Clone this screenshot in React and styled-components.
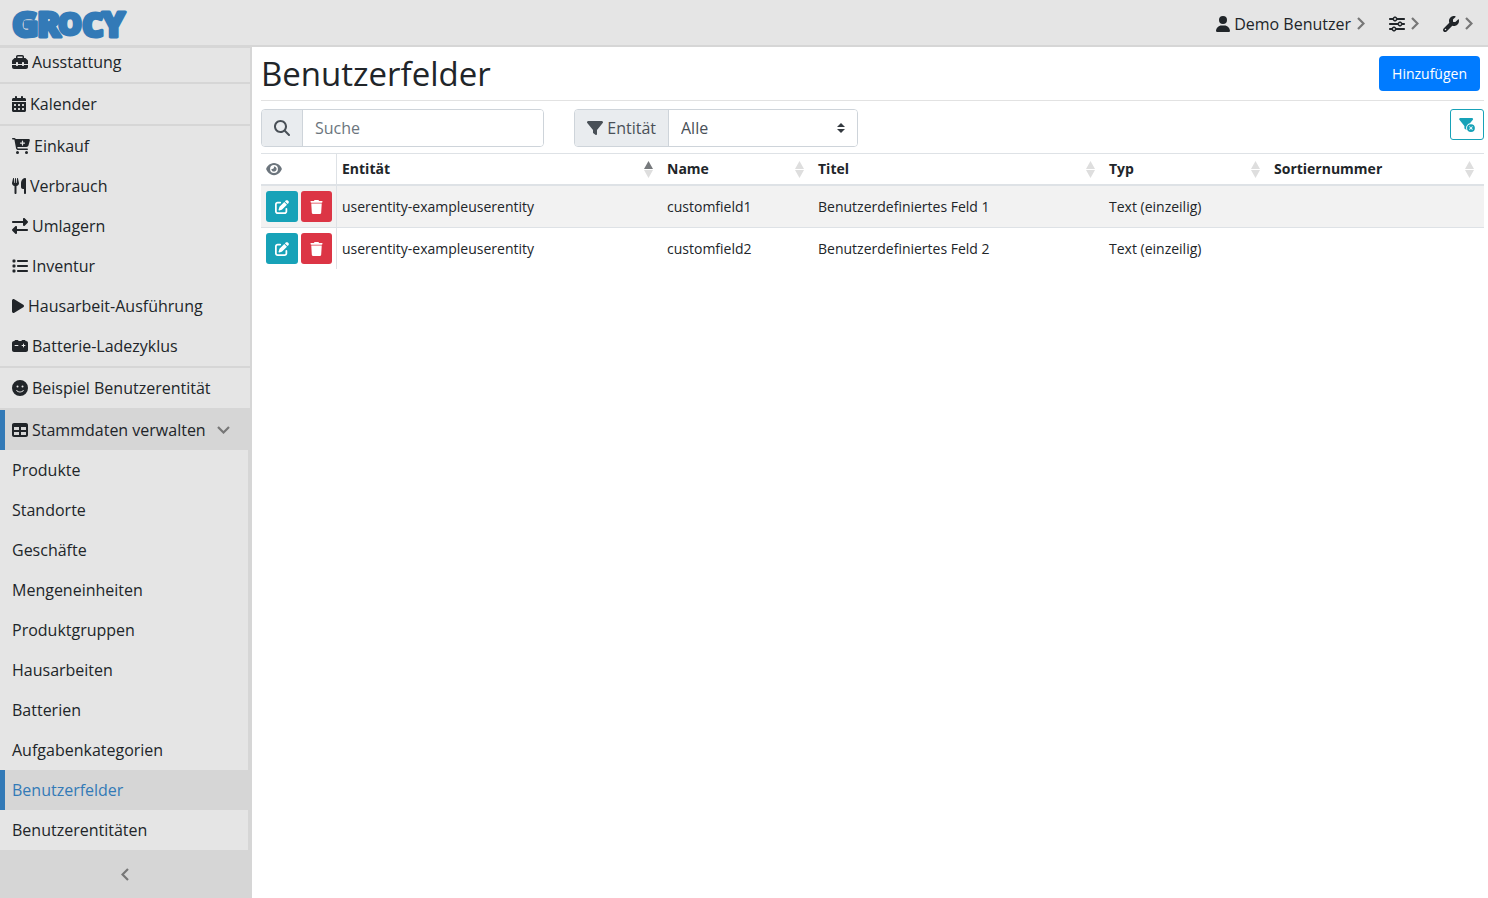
import React from 'react';
import styled, { createGlobalStyle, css } from 'styled-components';
import {
  FaToolbox, FaCalendarDays, FaCartPlus, FaUtensils, FaRightLeft, FaList, FaPlay,
  FaCarBattery, FaFaceSmile, FaTable, FaUser, FaSliders, FaWrench,
  FaMagnifyingGlass, FaFilter, FaFilterCircleXmark,
  FaEye, FaPenToSquare, FaTrash,
} from 'react-icons/fa6';

const Global = createGlobalStyle`
  * { box-sizing: border-box; }
  html, body, #root { height: 100%; }
  body {
    margin: 0;
    overflow: hidden;
    background: #fff;
    color: #212529;
    font: 16px/24px "Open Sans", "Noto Sans", sans-serif;
  }
  svg { display: block; flex: none; }
`;

const Page = styled.div`
  display: flex;
  flex-direction: column;
  height: 100vh;
`;

const TopBar = styled.header`
  display: flex;
  align-items: center;
  justify-content: space-between;
  flex: none;
  height: 47px;
  padding: 0 15px 0 8px;
  background: #e5e5e5;
  border-bottom: 2px solid #d6d6d6;
`;

const LogoLink = styled.a`
  display: block;
`;

const LogoText = styled.text`
  font-family: "Open Sans", sans-serif;
  font-weight: 800;
  fill: #337ab7;
  stroke: #337ab7;
  stroke-width: 3px;
  stroke-linejoin: round;
`;

const TopMenu = styled.nav`
  display: flex;
  gap: 24px;
  padding-top: 2px;
`;

const TopButton = styled.button`
  display: flex;
  align-items: center;
  gap: 4px;
  padding: 0;
  border: 0;
  background: none;
  color: #212529;
  font: inherit;
`;

const Icon = styled.span`
  display: inline-flex;
  svg {
    width: ${(p) => p.$w || 16}px;
    height: ${(p) => p.$h || 16}px;
  }
`;

const Caret = styled.span`
  display: inline-flex;
  color: #777;
  margin-left: ${(p) => p.$gap || 0}px;
`;

const Body = styled.div`
  display: flex;
  flex: 1;
  min-height: 0;
`;

const Sidebar = styled.aside`
  display: flex;
  flex-direction: column;
  flex: none;
  width: 252px;
  background: #d6d6d6;
  padding-top: 1px;
`;

const NavScroll = styled.nav`
  flex: 1;
  min-height: 0;
  overflow: hidden;
`;

const NavList = styled.ul`
  list-style: none;
  margin: ${(p) => (p.$scrolled ? '-6px 0 0' : 0)};
  padding: 0;
`;

const NavItem = styled.li`
  margin-right: ${(p) => (p.$sub ? 4 : 2)}px;
  background: #e5e5e5;
  ${(p) => p.$divided && css`border-bottom: 2px solid #d6d6d6;`}
  ${(p) => p.$active && css`background: #d6d6d6;`}
`;

const NavLink = styled.a`
  display: flex;
  align-items: center;
  gap: 4px;
  height: 40px;
  padding-left: ${(p) => (p.$active ? 7 : 12)}px;
  border-left: ${(p) => (p.$active ? '5px solid #337ab7' : 0)};
  color: ${(p) => (p.$current ? '#337ab7' : '#212529')};
  text-decoration: none;
  white-space: nowrap;
`;

const Collapse = styled.button`
  display: flex;
  align-items: center;
  justify-content: center;
  height: 48px;
  padding: 0 2px 0 0;
  border: 0;
  background: #d6d6d6;
  color: #777;
`;

const Main = styled.main`
  flex: 1;
  min-width: 0;
  padding: 9px 4px 0 9px;
`;

const TitleRow = styled.div`
  display: flex;
  align-items: flex-start;
  justify-content: space-between;
  height: 45px;
  padding-right: 4px;
  border-bottom: 1px solid #e2e2e2;
`;

const Title = styled.h1`
  margin: 0;
  font-size: 33px;
  line-height: 36px;
  font-weight: 400;
`;

const AddButton = styled.button`
  height: 35px;
  padding: 0 13px;
  border: 0;
  border-radius: 4px;
  background: #007bff;
  color: #fff;
  font: 14px/21px "Open Sans", "Noto Sans", sans-serif;
`;

const Filters = styled.div`
  display: grid;
  grid-template-columns: repeat(4, 1fr);
  column-gap: 30px;
  align-items: start;
  margin: 8px 0 6px;
`;

const Group = styled.div`
  display: flex;
  height: 38px;
  border: 1px solid #ced4da;
  border-radius: 4px;
  overflow: hidden;
`;

const GroupLabel = styled.label`
  display: flex;
  align-items: center;
  gap: 4px;
  flex: none;
  padding: 0 12px;
  background: #e9ecef;
  border-right: 1px solid #ced4da;
  color: #495057;
`;

const control = css`
  width: 100%;
  min-width: 0;
  border: 0;
  padding: 0 12px;
  background: #fff;
  color: #495057;
  font: inherit;
  outline: 0;
`;

const SearchInput = styled.input`
  ${control}
  &::placeholder { color: #6c757d; opacity: 1; }
`;

const SelectWrap = styled.div`
  position: relative;
  display: flex;
  flex: 1;
  > svg {
    position: absolute;
    right: 12px;
    top: 13px;
    pointer-events: none;
  }
`;

const Select = styled.select`
  ${control}
  appearance: none;
`;

const ClearButton = styled.button`
  grid-column: 4;
  justify-self: end;
  display: flex;
  align-items: center;
  justify-content: center;
  width: 34px;
  height: 31px;
  padding: 0;
  border: 1px solid #17a2b8;
  border-radius: 3px;
  background: #fff;
  color: #17a2b8;
`;

const Table = styled.table`
  width: 100%;
  table-layout: fixed;
  border-collapse: separate;
  border-spacing: 0;
  font-size: 14px;
  line-height: 20px;
`;

const Col = styled.col`
  width: ${(p) => p.$w}px;
`;

const Th = styled.th`
  padding: 5px;
  border-top: 1px solid #dee2e6;
  border-bottom: 2px solid #dee2e6;
  text-align: left;
  font-weight: 700;
  &:first-child { border-right: 1px solid #dee2e6; color: #6c757d; }
`;

const HeadCell = styled.div`
  display: flex;
  align-items: center;
  justify-content: space-between;
  height: 20px;
  padding-right: ${(p) => (p.$last ? 5 : 4)}px;
`;

const Tr = styled.tr`
  background: ${(p) => (p.$odd ? '#f2f2f2' : '#fff')};
`;

const Td = styled.td`
  height: ${(p) => (p.$first ? 41 : 42)}px;
  padding: 0 5px;
  border-top: ${(p) => (p.$first ? 0 : '1px solid #dee2e6')};
  &:first-child { border-right: 1px solid #dee2e6; padding-right: 4px; }
`;

const Actions = styled.div`
  display: flex;
  gap: 3px;
`;

const ActionButton = styled.button`
  display: flex;
  align-items: center;
  justify-content: center;
  width: ${(p) => (p.$danger ? 31 : 32)}px;
  height: 31px;
  padding: 0;
  border: 0;
  border-radius: 3px;
  background: ${(p) => (p.$danger ? '#dc3545' : '#17a2b8')};
  color: #fff;
`;

const PlainButton = styled.button`
  display: flex;
  padding: 0;
  border: 0;
  background: none;
  color: inherit;
`;

const NAV = [
  { label: 'Ausstattung', icon: FaToolbox, divided: true },
  { label: 'Kalender', icon: FaCalendarDays, width: 14, divided: true },
  { label: 'Einkauf', icon: FaCartPlus, width: 18 },
  { label: 'Verbrauch', icon: FaUtensils, width: 14 },
  { label: 'Umlagern', icon: FaRightLeft },
  { label: 'Inventur', icon: FaList },
  { label: 'Hausarbeit-Ausführung', icon: FaPlay, width: 12 },
  { label: 'Batterie-Ladezyklus', icon: FaCarBattery, divided: true },
  { label: 'Beispiel Benutzerentität', icon: FaFaceSmile, divided: true },
];

const SUB = [
  'Produkte', 'Standorte', 'Geschäfte', 'Mengeneinheiten', 'Produktgruppen',
  'Hausarbeiten', 'Batterien', 'Aufgabenkategorien', 'Benutzerfelder', 'Benutzerentitäten',
];

const COLUMNS = ['Entität', 'Name', 'Titel', 'Typ', 'Sortiernummer'];
const WIDTHS = [76, 325, 151, 291, 165, 215];

const ROWS = [
  ['userentity-exampleuserentity', 'customfield1', 'Benutzerdefiniertes Feld 1', 'Text (einzeilig)', ''],
  ['userentity-exampleuserentity', 'customfield2', 'Benutzerdefiniertes Feld 2', 'Text (einzeilig)', ''],
];

function Logo() {
  return (
    <svg width="122" height="44" viewBox="0 0 122 44" role="img" aria-label="Grocy">
      <LogoText>
        <tspan x="4" y="36" fontSize="36">G</tspan>
        <tspan x="29" y="36" fontSize="35">R</tspan>
        <tspan x="50" y="34" fontSize="30">O</tspan>
        <tspan x="74" y="36" fontSize="34">C</tspan>
        <tspan x="94" y="36" fontSize="35">Y</tspan>
      </LogoText>
    </svg>
  );
}

const ARROWS = {
  right: { w: 8, h: 13, d: 'M1 1 6.500 6.500 1 12' },
  left: { w: 8, h: 13, d: 'M7 1 1.500 6.500 7 12' },
  down: { w: 13, h: 8, d: 'M1 1 6.500 6.500 12 1' },
};

function Arrow({ to }) {
  const { w, h, d } = ARROWS[to];
  return (
    <svg width={w} height={h} viewBox={`0 0 ${w} ${h}`} aria-hidden="true">
      <path d={d} fill="none" stroke="currentColor" strokeWidth="2.200" />
    </svg>
  );
}

function SortMark({ active }) {
  return (
    <svg width="9" height="17" viewBox="0 0 9 17" aria-hidden="true">
      <path d="M0 8 4.500 0 9 8z" fill={active ? '#777a7d' : '#dedede'} />
      <path d="M0 9h9L4.500 17z" fill="#dedede" />
    </svg>
  );
}

export default function App() {
  return (
    <Page>
      <Global />
      <TopBar>
        <LogoLink href="#"><Logo /></LogoLink>
        <TopMenu>
          <TopButton><Icon $w={14}><FaUser /></Icon>Demo Benutzer<Caret $gap={2}><Arrow to="right" /></Caret></TopButton>
          <TopButton aria-label="Ansicht"><Icon><FaSliders /></Icon><Caret $gap={2}><Arrow to="right" /></Caret></TopButton>
          <TopButton aria-label="Einstellungen"><Icon><FaWrench /></Icon><Caret $gap={2}><Arrow to="right" /></Caret></TopButton>
        </TopMenu>
      </TopBar>
      <Body>
        <Sidebar>
          <NavScroll>
            <NavList $scrolled>
              {NAV.map(({ label, icon: Glyph, width, divided }) => (
                <NavItem key={label} $divided={divided}>
                  <NavLink href="#"><Icon $w={width}><Glyph /></Icon>{label}</NavLink>
                </NavItem>
              ))}
              <NavItem $active>
                <NavLink href="#" $active>
                  <Icon><FaTable /></Icon>Stammdaten verwalten
                  <Caret $gap={7}><Arrow to="down" /></Caret>
                </NavLink>
              </NavItem>
              <li>
                <NavList>
                  {SUB.map((label) => {
                    const on = label === 'Benutzerfelder';
                    return (
                      <NavItem key={label} $sub $active={on}>
                        <NavLink href="#" $active={on} $current={on}>{label}</NavLink>
                      </NavItem>
                    );
                  })}
                </NavList>
              </li>
            </NavList>
          </NavScroll>
          <Collapse aria-label="Seitenleiste einklappen"><Arrow to="left" /></Collapse>
        </Sidebar>
        <Main>
          <TitleRow>
            <Title>Benutzerfelder</Title>
            <AddButton>Hinzufügen</AddButton>
          </TitleRow>
          <Filters>
            <Group>
              <GroupLabel htmlFor="search" aria-label="Suche"><Icon><FaMagnifyingGlass /></Icon></GroupLabel>
              <SearchInput id="search" type="text" placeholder="Suche" />
            </Group>
            <Group>
              <GroupLabel htmlFor="entity"><Icon><FaFilter /></Icon>Entität</GroupLabel>
              <SelectWrap>
                <Select id="entity"><option>Alle</option></Select>
                <svg width="8" height="10" viewBox="0 0 4 5" aria-hidden="true">
                  <path fill="#343a40" d="M2 0L0 2h4zm0 5L0 3h4z" />
                </svg>
              </SelectWrap>
            </Group>
            <ClearButton aria-label="Filter zurücksetzen"><Icon $w={16} $h={14}><FaFilterCircleXmark /></Icon></ClearButton>
          </Filters>
          <Table>
            <colgroup>{WIDTHS.map((w, i) => <Col key={i} $w={w} />)}</colgroup>
            <thead>
              <tr>
                <Th><PlainButton aria-label="Spalten"><Icon $w={16} $h={14}><FaEye /></Icon></PlainButton></Th>
                {COLUMNS.map((c, i) => (
                  <Th key={c}>
                    <HeadCell $last={i === COLUMNS.length - 1}>{c}<SortMark active={i === 0} /></HeadCell>
                  </Th>
                ))}
              </tr>
            </thead>
            <tbody>
              {ROWS.map((row, r) => (
                <Tr key={r} $odd={r % 2 === 0}>
                  <Td $first={r === 0}>
                    <Actions>
                      <ActionButton aria-label="Bearbeiten"><Icon $w={14} $h={14}><FaPenToSquare /></Icon></ActionButton>
                      <ActionButton $danger aria-label="Löschen"><Icon $w={13} $h={14}><FaTrash /></Icon></ActionButton>
                    </Actions>
                  </Td>
                  {row.map((cell, i) => <Td key={i} $first={r === 0}>{cell}</Td>)}
                </Tr>
              ))}
            </tbody>
          </Table>
        </Main>
      </Body>
    </Page>
  );
}
